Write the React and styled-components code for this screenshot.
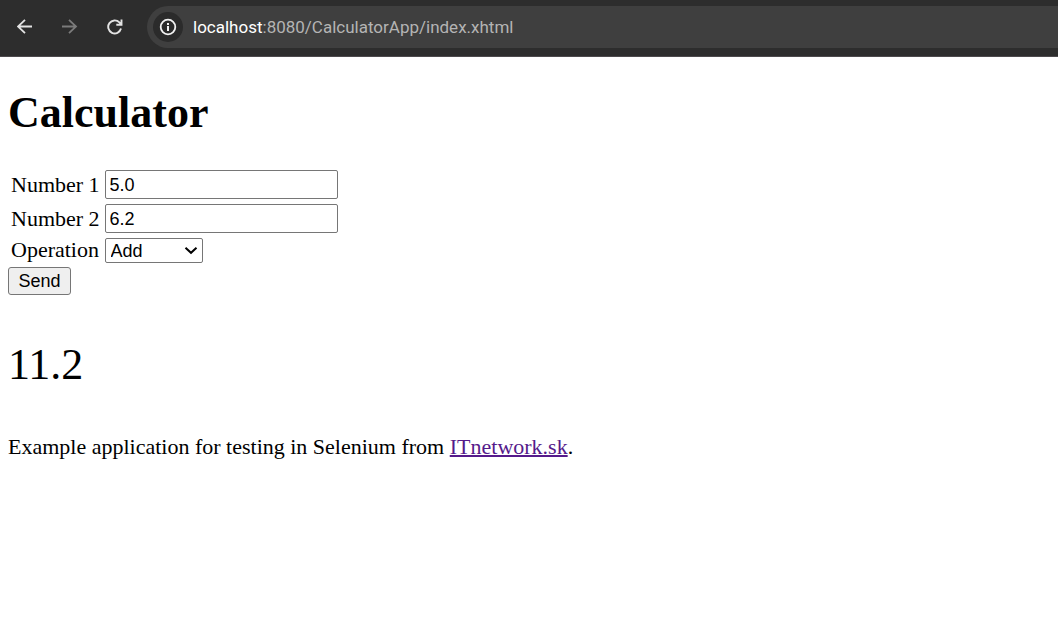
import React, { useState } from "react";
import styled, { createGlobalStyle } from "styled-components";

const GlobalStyle = createGlobalStyle`
  *, *::before, *::after { box-sizing: border-box; }
  body {
    margin: 0;
    background: #fff;
    color: #000;
    font-family: "Liberation Serif", "Times New Roman", serif;
    font-size: 22px;
    line-height: 26px;
  }
`;

const BrowserBar = styled.header`
  display: flex;
  align-items: center;
  padding: 6px 0 8px 8px;
  background: #2d2d2d;
  border-bottom: 1px solid #4d4a4d;
`;

const NavButtons = styled.nav`
  display: flex;
  gap: 11px;
  margin-right: 15px;
`;

const NavButton = styled.button`
  display: flex;
  align-items: center;
  justify-content: center;
  width: 34px;
  height: 34px;
  padding: 0;
  border: 0;
  background: none;
  color: ${({ disabled }) => (disabled ? "#7b7b7b" : "#e3e3e3")};
`;

const AddressBar = styled.div`
  display: flex;
  flex: 1;
  align-items: center;
  gap: 10px;
  height: 42px;
  padding: 0 6px;
  border-radius: 21px 0 0 21px;
  background: #3f3f3f;
`;

const SiteInfo = styled.button`
  display: flex;
  align-items: center;
  justify-content: center;
  width: 30px;
  height: 30px;
  padding: 0;
  border: 0;
  border-radius: 50%;
  background: #2b2b2b;
  color: #f2f2f2;
`;

const Url = styled.span`
  color: #b4b4b4;
  font-family: Roboto, "Segoe UI", sans-serif;
  font-size: 17px;
  line-height: 26px;
  white-space: nowrap;
`;

const Host = styled.span`
  color: #fff;
`;

const Page = styled.main`
  padding: 31px 8px;
`;

const Title = styled.h1`
  margin: 0 0 28px;
  font-size: 44px;
  line-height: 50px;
`;

const FormTable = styled.table`
  margin-bottom: 1px;
  border-spacing: 3px;

  th {
    padding: 0;
    font-weight: normal;
    text-align: left;
  }

  td {
    padding: 0 0 0 2px;
  }
`;

const TextInput = styled.input`
  display: block;
  width: 233px;
  height: 29px;
  margin: 1px 0;
  padding: 1px 4px 0;
  border: 1px solid #767676;
  border-radius: 2px;
  background: #fff;
  color: #000;
  font-family: "Liberation Sans", Arial, sans-serif;
  font-size: 18px;
`;

const SelectBox = styled.div`
  display: grid;
  width: 98px;
  align-items: center;

  > * { grid-area: 1 / 1; }
  > svg { justify-self: end; margin-right: 5px; pointer-events: none; }
`;

const Select = styled.select`
  width: 100%;
  height: 25px;
  padding: 1px 5px 0;
  border: 1px solid #767676;
  border-radius: 2px;
  appearance: none;
  background: #fff;
  color: #000;
  font-family: "Liberation Sans", Arial, sans-serif;
  font-size: 18px;
  line-height: 22px;
`;

const SubmitButton = styled.button`
  display: block;
  width: 63px;
  height: 28px;
  padding: 0;
  border: 1px solid #767676;
  border-radius: 3px;
  background: #efefef;
  color: #000;
  font-family: "Liberation Sans", Arial, sans-serif;
  font-size: 18px;
`;

const Result = styled.p`
  margin: 45px 0 44px;
  font-size: 44px;
  line-height: 50px;
`;

const Footnote = styled.p`
  margin: 0;
`;

const VisitedLink = styled.a`
  color: #551a8b;
  text-decoration-thickness: 2px;
`;

const ArrowIcon = ({ forward }) => (
  <svg width="16" height="16" viewBox="0 0 16 16" fill="none" stroke="currentColor" strokeWidth="1.8" aria-hidden="true">
    <path d={forward ? "M0 7.5H14M7 0.8L14 7.5L7 14.2" : "M15 7.5H1M8 0.8L1 7.5L8 14.2"} />
  </svg>
);

const ReloadIcon = () => (
  <svg width="16" height="16" viewBox="0 0 16 16" fill="none" stroke="currentColor" strokeWidth="1.9" aria-hidden="true">
    <path d="M14 9.6A6.5 6.5 0 1 1 12.4 3.4L14.3 5.4M14.5 0.5V5.7H9.3" />
  </svg>
);

const InfoIcon = () => (
  <svg width="18" height="18" viewBox="0 0 18 18" fill="none" stroke="currentColor" strokeWidth="2" aria-hidden="true">
    <circle cx="9" cy="9" r="7.3" strokeWidth="1.8" />
    <path d="M9 8V13M9 5V7" />
  </svg>
);

const ChevronIcon = () => (
  <svg width="14" height="10" viewBox="0 0 14 10" fill="none" stroke="#000" strokeWidth="2" aria-hidden="true">
    <path d="M1.5 2.8L7 7.8L12.5 2.8" />
  </svg>
);

export default function App() {
  const [first, setFirst] = useState("5.0");
  const [second, setSecond] = useState("6.2");
  const [operation, setOperation] = useState("add");
  const [result, setResult] = useState("11.2");

  const calculate = (event) => {
    event.preventDefault();
    const a = Number(first);
    const b = Number(second);
    const results = { add: a + b, subtract: a - b, multiply: a * b, divide: a / b };
    setResult(String(results[operation]));
  };

  return (
    <>
      <GlobalStyle />
      <BrowserBar>
        <NavButtons aria-label="Browser navigation">
          <NavButton type="button" aria-label="Back"><ArrowIcon /></NavButton>
          <NavButton type="button" aria-label="Forward" disabled><ArrowIcon forward /></NavButton>
          <NavButton type="button" aria-label="Reload"><ReloadIcon /></NavButton>
        </NavButtons>
        <AddressBar>
          <SiteInfo type="button" aria-label="Site information"><InfoIcon /></SiteInfo>
          <Url><Host>localhost</Host>:8080/CalculatorApp/index.xhtml</Url>
        </AddressBar>
      </BrowserBar>
      <Page>
        <Title>Calculator</Title>
        <form onSubmit={calculate}>
          <FormTable>
            <tbody>
              <tr>
                <th scope="row"><label htmlFor="first">Number 1</label></th>
                <td><TextInput id="first" value={first} onChange={(e) => setFirst(e.target.value)} /></td>
              </tr>
              <tr>
                <th scope="row"><label htmlFor="second">Number 2</label></th>
                <td><TextInput id="second" value={second} onChange={(e) => setSecond(e.target.value)} /></td>
              </tr>
              <tr>
                <th scope="row"><label htmlFor="operation">Operation</label></th>
                <td>
                  <SelectBox>
                    <Select id="operation" value={operation} onChange={(e) => setOperation(e.target.value)}>
                      <option value="add">Add</option>
                      <option value="subtract">Subtract</option>
                      <option value="multiply">Multiply</option>
                      <option value="divide">Divide</option>
                    </Select>
                    <ChevronIcon />
                  </SelectBox>
                </td>
              </tr>
            </tbody>
          </FormTable>
          <SubmitButton type="submit">Send</SubmitButton>
        </form>
        <Result>{result}</Result>
        <Footnote>
          Example application for testing in Selenium from <VisitedLink href="#itnetwork">ITnetwork.sk</VisitedLink>.
        </Footnote>
      </Page>
    </>
  );
}
